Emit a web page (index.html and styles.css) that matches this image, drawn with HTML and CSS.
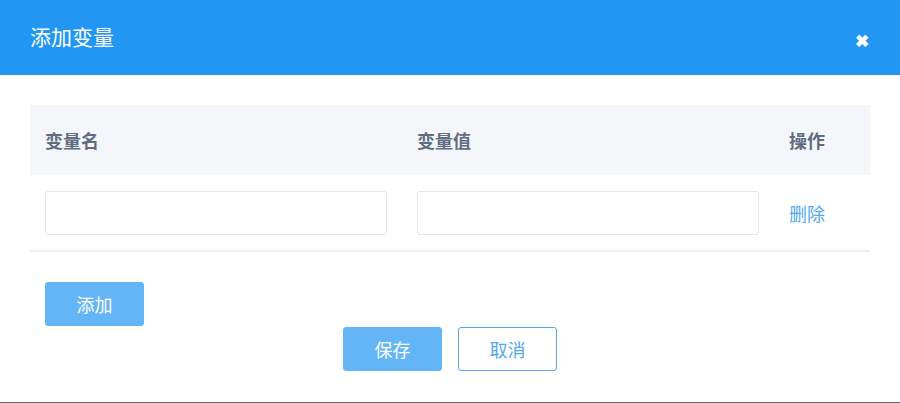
FILE: index.html
```html
<!DOCTYPE html>
<html lang="zh-CN">

<head>
    <meta charset="UTF-8">
    <meta name="viewport" content="width=device-width, initial-scale=1.0">
    <title>添加变量</title>
    <link rel="stylesheet" href="styles.css">
</head>

<body>
    <div class="dialog">
        <div class="dialog-header">
            <h2>添加变量</h2>
            <span class="close">&#10006;</span>
        </div>

        <div class="dialog-body">
            <table class="vars">
                <thead>
                    <tr>
                        <th class="col-name">变量名</th>
                        <th class="col-value">变量值</th>
                        <th class="col-op">操作</th>
                    </tr>
                </thead>
                <tbody>
                    <tr>
                        <td><input type="text" class="field"></td>
                        <td><input type="text" class="field"></td>
                        <td><a href="#" class="link">删除</a></td>
                    </tr>
                </tbody>
            </table>

            <button class="btn btn-primary btn-add">添加</button>

            <div class="actions">
                <button class="btn btn-primary">保存</button>
                <button class="btn btn-outline">取消</button>
            </div>
        </div>
    </div>
</body>

</html>
```

FILE: styles.css
```css
* {
    margin: 0;
    padding: 0;
    box-sizing: border-box;
}

body {
    background-color: #FFF;
    font-family: "Noto Sans CJK SC", "Liberation Sans", sans-serif;
}

.dialog {
    width: 900px;
    height: 403px;
    border-bottom: 1px solid #666;
}

.dialog-header {
    height: 75px;
    background-color: #2196F3;
    display: flex;
    align-items: center;
    justify-content: space-between;
    padding: 0 31px 0 30px;
}

.dialog-header h2 {
    color: #FFF;
    font-size: 21px;
    font-weight: normal;
    margin-top: -3px;
}

.close {
    color: #FFF;
    font-size: 17px;
    font-weight: bold;
    margin-top: 4px;
}

.dialog-body {
    padding: 30px 30px 0;
}

.vars {
    width: 840px;
    border-collapse: collapse;
    table-layout: fixed;
}

.vars th {
    height: 70px;
    background-color: #F5F6FA;
    color: #606C80;
    font-size: 18px;
    font-weight: bold;
    text-align: left;
    padding: 0 15px;
}

.col-name,
.col-value {
    width: 372px;
}

.vars td {
    height: 76px;
    padding: 0 15px;
    border-bottom: 2px solid #EEE;
}

.field {
    width: 100%;
    height: 44px;
    border: 1px solid #E4E6EA;
    border-radius: 3px;
    outline: none;
    display: block;
    margin-top: 1px;
}

.link {
    color: #52A9F2;
    font-size: 18px;
    text-decoration: none;
}

.btn {
    height: 44px;
    border-radius: 3px;
    font-size: 18px;
    font-family: inherit;
    cursor: pointer;
}

.btn-primary {
    background-color: #64B5F6;
    border: 1px solid #64B5F6;
    color: #FFF;
}

.btn-outline {
    background: #FFF;
    border: 1px solid #52A9F2;
    color: #52A9F2;
}

.btn-add {
    width: 99px;
    margin: 30px 0 0 15px;
}

.actions {
    display: flex;
    justify-content: center;
    gap: 16px;
    margin-top: 1px;
}

.actions .btn {
    width: 99px;
}
```
